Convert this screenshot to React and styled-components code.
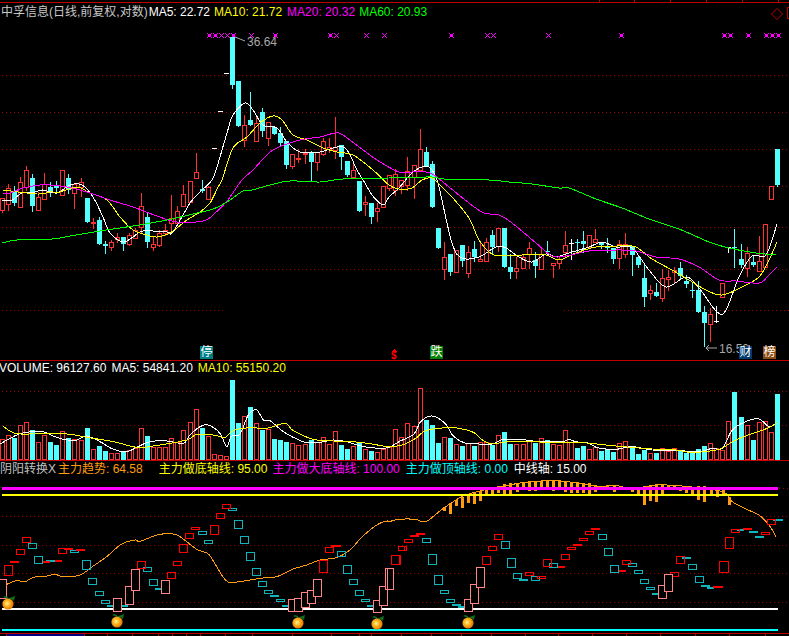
import styled, { createGlobalStyle } from 'styled-components';

const GlobalStyle = createGlobalStyle`
	html, body {
		margin: 0;
		background: #000;
	}
	body {
		font-family: "Liberation Sans", "Noto Sans CJK SC", sans-serif;
		font-size: 12px;
	}
`
const Screen = styled.div`
	width: 789px;
	height: 636px;
	overflow: hidden;
	background: #000;
	display: flex;
	flex-direction: column;
`
const Panel = styled.section`
	position: relative;
	flex: 0 0 auto;
	border-bottom: ${p => p.$open ? 'none' : '1px solid #c00000'};
`
const Legend = styled.div`
	display: flex;
	align-items: center;
	height: ${p => p.$h}px;
	padding-left: ${p => p.$pad || 0}px;
	white-space: nowrap;
	line-height: 14px;
`
const Item = styled.span`
	color: ${p => p.$c};
	margin-left: ${p => p.$ml || 0}px;
`
const Diamond = styled.svg`
	position: absolute;
	top: 4px;
	left: 770px;
`
const EdgeBox = styled.span`
	position: absolute;
	top: 4px;
	left: 787px;
	width: 6px;
	height: 10px;
	border: 1px solid #c00000;
`
const Tag = styled.span`
	position: absolute;
	bottom: 1px;
	left: ${p => p.$x}px;
	width: 13px;
	height: 13px;
	background: ${p => p.$bg};
	color: #fff;
	font-size: 12px;
	line-height: 13px;
	text-align: center;
`
const Plot = styled.svg`
	display: block;
	shape-rendering: crispEdges;
`

const RED = '#ff3232'
const CYAN = '#54ffff'
const GRID = '#a00000'
const TEAL = '#12b4bc'
const PINK = '#ff8484'
const ORANGE = '#ff9c10'
const xAt = i => Math.floor(2.3 + 6.055 * i)

// high, body top, body bottom, low, kind (index = trading day)
const candles = [
	[198, 198, 210, 212, 'r'], [184, 188, 204, 210, 'r'], [186, 192, 203, 205, 'c'], [177, 182, 207, 207, 'r'], [166, 170, 187, 190, 'r'],
	[174, 178, 206, 211, 'c'], [192, 197, 210, 210, 'r'], [173, 184, 199, 199, 'r'], [182, 187, 191, 196, 'c'], [181, 186, 188, 193, 'c'],
	[170, 170, 195, 195, 'r'], [174, 178, 190, 193, 'c'], [183, 184, 193, 208, 'r'], [178, 182, 187, 196, 'r'], [198, 198, 222, 222, 'c'],
	[218, 222, 222, 228, 'r'], [217, 220, 244, 244, 'c'], [241, 244, 246, 253, 'c'], [240, 242, 247, 250, 'r'], [233, 237, 239, 242, 'r'],
	[237, 237, 244, 250, 'c'], [233, 235, 244, 245, 'r'], [228, 230, 238, 238, 'r'], [193, 206, 227, 232, 'r'], [212, 217, 242, 247, 'c'],
	[237, 244, 247, 250, 'r'], [230, 233, 245, 246, 'r'], [224, 230, 233, 235, 'r'], [195, 218, 223, 233, 'r'], [206, 211, 223, 225, 'r'],
	[185, 194, 206, 206, 'r'], [181, 181, 202, 202, 'r'], [153, 172, 178, 178, 'r'], [180, 189, 191, 192, 'c'], [186, 187, 199, 199, 'r'],
	[148, 148, 148, 148, 'w'], [111, 111, 111, 111, 'w'], [73, 73, 73, 73, 'w'], [37, 37, 85, 88, 'c'], [81, 81, 126, 126, 'c'],
	[115, 125, 140, 146, 'r'], [92, 120, 125, 125, 'c'], [117, 123, 141, 141, 'r'], [108, 112, 131, 136, 'c'], [122, 122, 138, 145, 'r'],
	[127, 127, 134, 134, 'c'], [127, 133, 143, 146, 'c'], [141, 141, 165, 168, 'c'], [154, 154, 166, 168, 'r'], [149, 158, 159, 162, 'r'],
	[149, 153, 153, 163, 'r'], [151, 153, 162, 181, 'c'], [152, 152, 162, 170, 'r'], [138, 141, 154, 155, 'r'], [138, 147, 149, 152, 'r'],
	[117, 147, 150, 158, 'r'], [145, 145, 157, 169, 'c'], [161, 161, 175, 176, 'c'], [162, 170, 177, 177, 'r'], [181, 181, 211, 211, 'c'],
	[196, 202, 204, 215, 'r'], [203, 203, 217, 223, 'c'], [203, 208, 211, 221, 'r'], [186, 186, 207, 207, 'r'], [175, 175, 188, 190, 'r'],
	[169, 174, 190, 195, 'r'], [180, 180, 186, 193, 'r'], [157, 171, 185, 190, 'r'], [165, 165, 177, 198, 'r'], [129, 149, 170, 170, 'r'],
	[147, 152, 166, 166, 'c'], [161, 164, 207, 207, 'c'], [228, 228, 248, 248, 'c'], [242, 257, 269, 279, 'r'], [254, 254, 272, 275, 'c'],
	[250, 250, 272, 272, 'r'], [245, 245, 261, 266, 'c'], [246, 252, 273, 277, 'r'], [241, 249, 257, 261, 'c'], [243, 259, 261, 261, 'r'],
	[238, 242, 261, 261, 'r'], [230, 235, 247, 253, 'c'], [228, 228, 246, 251, 'r'], [228, 228, 267, 267, 'c'], [254, 267, 272, 278, 'c'],
	[257, 268, 271, 278, 'r'], [255, 257, 268, 268, 'r'], [242, 248, 254, 268, 'r'], [252, 260, 266, 277, 'c'], [248, 254, 269, 269, 'r'],
	[241, 251, 252, 255, 'c'], [263, 263, 265, 277, 'r'], [256, 259, 263, 268, 'r'], [231, 245, 252, 255, 'r'], [239, 243, 243, 260, 'w'],
	[239, 242, 243, 253, 'c'], [231, 241, 244, 252, 'c'], [235, 235, 247, 247, 'r'], [229, 239, 242, 242, 'r'], [242, 242, 245, 248, 'c'],
	[238, 247, 248, 252, 'c'], [248, 248, 259, 263, 'c'], [240, 244, 258, 268, 'r'], [233, 244, 254, 257, 'r'], [246, 246, 255, 275, 'c'],
	[255, 257, 265, 267, 'c'], [263, 278, 297, 306, 'c'], [285, 290, 293, 299, 'r'], [283, 292, 296, 296, 'c'], [269, 278, 298, 301, 'r'],
	[270, 277, 279, 290, 'r'], [267, 270, 272, 283, 'r'], [262, 268, 276, 279, 'c'], [275, 281, 284, 287, 'c'], [282, 290, 291, 297, 'c'],
	[281, 290, 312, 312, 'c'], [306, 312, 323, 346, 'c'], [308, 314, 324, 341, 'r'], [306, 321, 321, 323, 'w'], [283, 283, 297, 297, 'r'],
	[247, 247, 247, 253, 'w'], [229, 247, 248, 267, 'c'], [244, 259, 265, 267, 'c'], [247, 253, 268, 276, 'r'], [255, 262, 265, 266, 'c'],
	[236, 261, 271, 271, 'r'], [224, 224, 267, 267, 'r'], [186, 186, 199, 199, 'r'], [149, 149, 185, 186, 'c'],
]

// volume bar tops by trading day, traced at 3x from y=360; a bar's colour follows its candle
const volumeTops = [
	238, 225, 235, 195, 186, 210, 247, 225, 246, 255, 214, 234, 238, 240, 204, 267, 258, 273, 280, 280, 275, 270, 265,
	204, 228, 260, 262, 262, 235, 245, 210, 186, 148, 204, 228, 283, 285, 288, 60, 189, 168, 141, 189, 210, 207, 237,
	240, 246, 250, 255, 251, 240, 247, 232, 252, 213, 255, 267, 258, 250, 268, 272, 276, 268, 262, 208, 232, 190, 198,
	85, 180, 195, 249, 232, 234, 252, 258, 250, 258, 247, 245, 255, 225, 216, 252, 252, 252, 240, 250, 234, 240, 252,
	255, 210, 245, 264, 258, 267, 262, 272, 266, 275, 250, 243, 262, 282, 270, 280, 278, 265, 273, 265, 272, 278, 278,
	267, 258, 250, 265, 270, 183, 96, 171, 195, 240, 186, 183, 216, 102,
]

const ma5 = [[2,200],[12,200],[22,193],[35,192],[43,190],[57,193],[70,185],[82,185],[93,197],[103,217],[110,233],[123,242],[133,237],[143,231],[167,232],[173,232],[190,203],[200,192],[212,180],[217,167],[227,133],[233,115],[245,103],[253,110],[263,125],[277,128],[287,142],[300,152],[320,152],[337,147],[347,150],[357,170],[365,183],[372,195],[383,205],[389,197],[399,188],[412,173],[426,166],[434,173],[439,187],[452,243],[462,258],[479,257],[496,247],[506,248],[519,257],[532,262],[546,254],[556,257],[569,253],[589,247],[602,242],[616,247],[632,248],[649,270],[666,287],[686,277],[699,288],[717,312],[726,310],[739,277],[752,256],[766,255],[777,224]]
const ma10 = [[3,190],[37,194],[50,192],[60,192],[77,187],[90,193],[107,200],[120,217],[133,230],[147,235],[157,237],[170,233],[187,220],[200,212],[210,203],[218,187],[222,180],[233,148],[247,137],[260,123],[273,116],[282,120],[293,135],[307,140],[323,148],[337,152],[353,155],[373,170],[389,185],[399,189],[412,188],[422,180],[432,178],[442,187],[452,197],[469,218],[479,240],[492,254],[506,256],[522,255],[546,255],[559,260],[576,253],[596,247],[622,246],[636,247],[652,259],[672,270],[689,280],[706,290],[722,295],[742,287],[759,277],[769,260],[777,242]]
const ma20 = [[3,193],[10,193],[23,188],[40,185],[50,185],[67,187],[87,192],[110,200],[133,207],[157,216],[177,222],[203,221],[213,215],[227,201],[242,180],[253,170],[273,150],[300,140],[320,137],[335,133],[343,135],[363,150],[380,162],[399,172],[412,172],[426,172],[434,175],[449,187],[469,203],[484,213],[499,215],[512,223],[536,243],[552,256],[566,256],[589,251],[616,250],[636,251],[656,257],[679,259],[699,267],[719,280],[736,281],[759,283],[769,275],[777,267]]
const ma60 = [[2,243],[17,240],[52,239],[70,236],[100,231],[133,226],[167,220],[193,214],[213,209],[227,202],[243,191],[252,190],[270,185],[290,181],[320,182],[343,179],[389,178],[432,177],[444,179],[489,180],[509,182],[532,184],[559,188],[569,188],[596,199],[622,208],[649,219],[679,229],[709,242],[729,248],[756,253],[776,255]]

const marks = [[209,1],[215,1],[221,0],[227,0],[233,1],[251,0],[275,1],[330,1],[336,0],[366,0],[384,0],[451,1],[487,0],[493,0],[548,0],[621,1],[724,1],[730,1],[748,1],[766,1],[772,1],[778,1]]

// anything below is traced off a 3x crop, so it is mapped back to page pixels here
const fromCrop = (pts, dx, y0) => pts.map(([x, y]) => [x / 3 + dx, y / 3 + y0])

const volWhite = [
	...fromCrop([[0,252],[50,225],[75,218],[100,215],[130,215],[160,228],[190,238],[230,240],[260,228],[300,245],[340,268],[380,275],[410,262],[450,245],[500,243],[550,250],[570,225],[600,200],[625,195],[660,220],[680,260],[695,228],[720,222],[745,165],[770,150],[790,180],[810,182],[850,215],[890,237],[920,248],[960,247],[1000,240],[1040,245],[1090,260],[1140,265]], 0, 360),
	...fromCrop([[0,262],[30,245],[75,222],[95,185],[130,168],[170,192],[190,225],[225,248],[270,252],[310,252],[345,238],[410,240],[450,245],[520,245],[540,238],[560,245],[600,250],[625,263],[680,268],[730,260],[790,270],[870,272],[930,275],[970,265],[1000,265],[1030,210],[1070,185],[1110,177],[1140,200],[1163,188]], 389, 360),
]
const volYellow = [
	...fromCrop([[8,198],[45,220],[100,222],[200,222],[260,232],[340,245],[410,262],[460,258],[560,240],[590,223],[640,225],[675,232],[700,212],[750,203],[800,205],[855,190],[880,212],[940,238],[1000,243],[1080,247],[1150,258]], 0, 360),
	...fromCrop([[0,260],[40,255],[80,235],[110,212],[170,203],[210,205],[255,218],[280,240],[310,252],[360,245],[500,247],[580,248],[680,258],[790,267],[860,270],[910,277],[990,268],[1030,245],[1070,228],[1140,203],[1163,188]], 389, 360),
]
const trend = [
	...fromCrop([[20,373],[50,362],[75,365],[100,352],[140,348],[165,343],[190,350],[240,345],[280,318],[320,290],[365,252],[405,240],[420,244],[475,224],[525,223],[560,245],[590,268],[625,282],[650,320],[675,358],[700,367],[780,355],[830,350],[880,327],[920,315],[960,300],[1010,293],[1050,270],[1085,232],[1130,195],[1160,183]], 0, 460),
	...fromCrop([[0,185],[30,178],[80,178],[95,184],[115,183],[150,155],[185,130],[225,107],[285,90],[340,80],[400,68],[490,62],[560,68],[620,78],[690,78],[730,90],[800,75],[900,80],[1000,95],[1030,125],[1070,147],[1110,165],[1140,195],[1162,232]], 389, 460),
]
const trendBars = [[166,140,153],[184,130,162],[202,120,138],[220,110,144],[238,105,130],[256,98,130],[274,92,122],[292,88,103],[311,83,100],[329,78,100],[347,72,103],[365,70,103],[384,68,96],[402,67,88],[420,67,93],[439,64,93],[457,64,85],[475,64,82],[493,60,92],[511,60,80],[529,64,96],[547,66,98],[566,66,98],[584,68,98],[602,70,103],[620,75,96],[638,78,82],[656,78,82],[675,78,96],[693,78,82],[729,85,96],[747,82,103],[766,78,135],[784,75,123],[802,72,125],[820,75,103],[838,75,88],[856,78,85],[875,85,93],[893,85,100],[911,85,103],[929,78,120],[947,78,125],[966,85,110],[984,85,113],[1002,90,103],[1020,110,135]]

const boxesLeft = [
	[TEAL, [[85,250,110,268],[103,289,128,313],[138,300,165,303],[211,271,236,280],[247,301,272,331],[265,355,290,376],[286,394,311,409],[304,421,329,434],[322,436,340,442],[365,437,383,440],[430,322,455,338],[448,358,473,380],[466,385,484,388],[595,214,620,226],[613,241,638,253],[685,145,710,154],[703,181,728,208],[721,229,746,254],[739,277,764,304],[757,325,782,349],[775,364,800,382],[793,391,818,403],[811,406,836,409],[829,418,854,427],[847,436,865,442],[1012,274,1037,292],[1030,316,1055,343],[1048,358,1073,376],[1066,391,1091,409],[1084,418,1109,427],[1102,436,1120,442]]],
	['#ff0000', [[13,316,38,350],[31,304,56,311],[49,268,74,287],[67,232,92,250],[130,305,147,308],[165,301,183,304],[175,265,200,284],[193,265,218,268],[229,268,254,274],[412,304,437,328],[502,337,527,359],[520,304,545,319],[538,253,563,281],[556,220,581,239],[574,202,599,212],[631,196,656,227],[649,160,674,178],[667,133,692,149],[958,301,983,341],[976,262,1001,281],[994,256,1020,259],[1174,286,1199,316],[1194,260,1212,274]]],
	[PINK, [[-2,358,20,418],[340,415,365,458],[376,379,401,437],[394,328,419,395],[484,361,509,404],[864,418,889,458],[883,415,907,458],[904,397,929,446],[922,391,947,434],[940,358,965,413],[1120,421,1145,461],[1138,379,1163,440],[1156,325,1181,392]]],
]
const boxesRight = [
	[TEAL, [[100,235,125,250],[118,283,143,316],[136,346,161,376],[154,391,179,403],[172,418,197,430],[190,433,215,439],[208,439,226,442],[337,244,362,268],[355,295,380,325],[373,340,398,358],[391,358,416,361],[427,349,452,364],[481,310,506,325],[628,223,653,241],[646,265,671,289],[664,316,689,340],[718,310,743,322],[736,331,761,343],[754,358,779,373],[772,382,797,391],[790,400,808,406],[898,313,923,331],[880,292,905,295],[919,349,944,370],[937,376,962,382],[955,382,972,385],[1045,208,1063,210],[1081,214,1106,220],[1099,229,1124,235],[1152,178,1178,181]]],
	['#ff0000', [[6,286,32,316],[28,259,53,274],[46,238,71,250],[64,226,89,232],[82,220,107,223],[280,289,305,316],[298,259,323,274],[316,223,341,241],[409,337,434,349],[445,349,470,358],[463,298,488,322],[508,319,525,322],[517,283,542,302],[535,262,560,271],[553,253,578,259],[571,235,596,244],[589,214,614,226],[607,205,632,208],[690,331,707,334],[700,301,725,316],[845,337,869,352],[862,289,887,313],[990,304,1016,340],[1009,232,1034,268],[972,379,999,382],[1027,208,1052,220],[1063,205,1088,208],[1117,217,1142,226],[1135,178,1160,196]]],
	[PINK, [[-5,325,14,392],[226,418,251,458],[244,373,269,434],[262,322,287,385],[808,376,833,418],[826,343,851,397]]],
]
const peaches = [[8, 604], [117, 622], [298, 623], [377, 624], [468, 623]]
const axisTicks = [6, 84, 107, 132, 158, 172, 186, 200, 225, 252, 292, 331, 359, 371, 401, 431, 461, 491, 525, 558, 592, 626, 660, 695, 729, 765]

// catmull-rom through the traced points, the averages are smooth in the picture
function smooth(pts) {
	let d = `M${pts[0][0]} ${pts[0][1]}`
	for (let i = 0; i < pts.length - 1; i++) {
		const a = pts[i - 1] || pts[i], b = pts[i], c = pts[i + 1], e = pts[i + 2] || c
		d += `C${b[0] + (c[0] - a[0]) / 6} ${b[1] + (c[1] - a[1]) / 6} ${c[0] - (e[0] - b[0]) / 6} ${c[1] - (e[1] - b[1]) / 6} ${c[0]} ${c[1]}`
	}
	return d
}

const Curve = ({ pts, color }) => <path d={smooth(pts)} fill="none" stroke={color} strokeWidth="1" />
const Dots = ({ y, from = 2, to = 789 }) => <line x1={from} x2={to} y1={y + .5} y2={y + .5} stroke={GRID} strokeDasharray="1 3" />
const Thick = ({ y, color, h = 2 }) => <rect x="2" width="776" y={y} height={h} fill={color} />

function Candle({ i, d }) {
	const [high, top, bottom, low, kind] = d
	const x = xAt(i)
	if (kind === 'w') {
		return <g fill="#fff">
			<rect x={x - 2} width="5" y={top} height="1" />
			{low > high && <rect x={x} width="1" y={high} height={low - high} />}
		</g>
	}
	const color = kind === 'c' ? CYAN : RED
	return <g>
		<rect x={x} width="1" y={high} height={low - high + 1} fill={color} />
		{kind === 'c'
			? <rect x={x - 2} width="5" y={top} height={Math.max(bottom - top, 1)} fill={color} />
			: <rect x={x - 1.5} width="4" y={top + .5} height={Math.max(bottom - top, 1)} fill="#000" stroke={color} />}
	</g>
}

// a big signal star has a solid 3px core, a small one is only the cross
function Mark({ x, big }) {
	return <g fill="#ff00ff">
		{big
			? <rect x={x - 1} y="34" width="3" height="3" />
			: <path d={`M${x} 35h1v1h-1zM${x - 1} 34h1v1h-1zM${x + 1} 34h1v1h-1zM${x - 1} 36h1v1h-1zM${x + 1} 36h1v1h-1z`} />}
		<path d={`M${x - 2} 33h1v1h-1zM${x + 2} 33h1v1h-1zM${x - 2} 37h1v1h-1zM${x + 2} 37h1v1h-1z`} />
	</g>
}

function Peach({ x, y }) {
	return <g shapeRendering="auto">
		<path d={`M${x - 1} ${y - 5}l8 -3l-1 5l-3 -2zM${x} ${y - 5}l-5 -2l2 -1l3 1z`} fill="#0f6e1c" />
		<circle cx={x} cy={y} r="5.6" fill="url(#peach)" />
	</g>
}

function Boxes({ groups, dx }) {
	return groups.map(([color, list]) => list.map(([x1, y1, x2, y2]) =>
		<rect key={`${color}${x1}${y1}`} x={Math.floor(x1 / 3) + dx + .5} y={Math.floor(y1 / 3) + 460.5}
			width={Math.round((x2 - x1) / 3)} height={Math.max(Math.round((y2 - y1) / 3) - 1, 1)}
			fill={color === PINK ? '#000' : 'none'} stroke={color} />))
}

function App() {
	return (
		<Screen>
			<GlobalStyle />
			<Plot width="789" height="3" viewBox="0 0 789 3">
				<rect y="2" width="789" height="1" fill="#c00000" />
				{[599, 634, 670, 706, 742, 778].map(x => <rect key={x} x={x} width="1" height="2" fill="#c00000" />)}
			</Plot>

			<Panel>
				<Legend $h={17} $pad={1}>
					<Item $c="#c8c8c8">中孚信息(日线,前复权,对数)</Item>
					<Item $c="#fff" $ml={1}>MA5: 22.72</Item>
					<Item $c="#ffff00" $ml={4}>MA10: 21.72</Item>
					<Item $c="#ff00ff" $ml={5}>MA20: 20.32</Item>
					<Item $c="#00ff00" $ml={4}>MA60: 20.93</Item>
				</Legend>
				<Diamond width="14" height="14" viewBox="0 0 14 14">
					<path d="M7 1.5L12.5 7L7 12.5L1.5 7Z" fill="none" stroke="#c00000" />
				</Diamond>
				<EdgeBox />
				<Plot width="789" height="340" viewBox="0 20 789 340">
					{[75, 112, 149, 186, 227, 269].map(y => <Dots key={y} y={y} />)}
					<Dots y={310} to={225} />
					<Dots y={310} from={564} />
					{marks.map(([x, big]) => <Mark key={x} x={x} big={big} />)}
					{candles.map((d, i) => <Candle key={i} i={i} d={d} />)}
					<Curve pts={ma5} color="#fff" />
					<Curve pts={ma10} color="#ffff00" />
					<Curve pts={ma20} color="#ff00ff" />
					<Curve pts={ma60} color="#00ff00" />
					<g fill="#a8a8a8" fontSize="12" fontFamily="Liberation Sans, sans-serif" shapeRendering="auto">
						<path d="M235 37L245 41" stroke="#a8a8a8" fill="none" />
						<text x="247" y="46">36.64</text>
						<path d="M717 348H706M709 345L706 348L709 351" stroke="#a8a8a8" fill="none" />
						<text x="719" y="353">16.50</text>
					</g>
					<g fill="#ff0000">
						<path d="M394 349l3 3h-6z" />
						<text x="391" y="359" fontSize="10" fontWeight="bold" fontFamily="Liberation Sans, sans-serif" shapeRendering="auto">$</text>
					</g>
				</Plot>
				<Tag $x={200} $bg="#007f86">停</Tag>
				<Tag $x={430} $bg="#008000">跌</Tag>
				<Tag $x={739} $bg="#003a70">财</Tag>
				<Tag $x={763} $bg="#8a4a10">榜</Tag>
			</Panel>

			<Panel>
				<Legend $h={14}>
					<Item $c="#fff" $ml={-1}>VOLUME: 96127.60</Item>
					<Item $c="#fff" $ml={5}>MA5: 54841.20</Item>
					<Item $c="#ffff00" $ml={5}>MA10: 55150.20</Item>
				</Legend>
				<Plot width="789" height="85" viewBox="0 375 789 85">
					<Dots y={391} />
					<Dots y={425} />
					{volumeTops.map((zy, i) => {
						const y = Math.round(zy / 3) + 360, x = xAt(i)
						return candles[i][4] === 'c'
							? <rect key={i} x={x - 2} width="5" y={y} height={460 - y} fill={CYAN} />
							: <rect key={i} x={x - 1.5} width="4" y={y + .5} height={459 - y} fill="#000" stroke={RED} />
					})}
					<Curve pts={volWhite} color="#fff" />
					<Curve pts={volYellow} color="#ffff00" />
				</Plot>
			</Panel>

			<Panel $open>
				<Legend $h={16}>
					<Item $c="#c0c0c0">阴阳转换X</Item>
					<Item $c={ORANGE} $ml={2}>主力趋势: 64.58</Item>
					<Item $c="#ffff00" $ml={16}>主力做底轴线: 95.00</Item>
					<Item $c="#ff00ff" $ml={5}>主力做大底轴线: 100.00</Item>
					<Item $c="#00ffff" $ml={6}>主力做顶轴线: 0.00</Item>
					<Item $c="#fff" $ml={6}>中线轴: 15.00</Item>
				</Legend>
				<Plot width="789" height="159" viewBox="0 477 789 159">
					<defs>
						<radialGradient id="peach" cx=".42" cy=".45" r=".62">
							<stop offset="0" stopColor="#fff4a0" />
							<stop offset=".4" stopColor="#ffb820" />
							<stop offset="1" stopColor="#d86800" />
						</radialGradient>
					</defs>
					<Dots y={516} />
					<Dots y={545} />
					<Dots y={573} />
					<Dots y={602} />
					<Dots y={488} from={779} />
					{trendBars.map(([zx, a, b]) => <rect key={zx} x={Math.floor(zx / 3) + 388} width="3" y={Math.round(a / 3) + 460} height={Math.round((b - a) / 3)} fill={ORANGE} />)}
					<Curve pts={trend} color={ORANGE} />
					<Thick y={487} color="#ff00ff" h={3} />
					<Thick y={494} color="#ffff00" />
					<Thick y={608} color="#fff" />
					<Thick y={629} color="#00ffff" />
					<Boxes groups={boxesLeft} dx={0} />
					<Boxes groups={boxesRight} dx={389} />
					{peaches.map(([x, y]) => <Peach key={x} x={x} y={y} />)}
					<rect y="633" width="789" height="1" fill="#c00000" />
					<rect x="7" y="634" width="77" height="2" fill="#000080" />
					{axisTicks.map(x => <rect key={x} x={x} y="634" width="1" height="2" fill="#c00000" />)}
				</Plot>
			</Panel>
		</Screen>
	);
}

export default App
